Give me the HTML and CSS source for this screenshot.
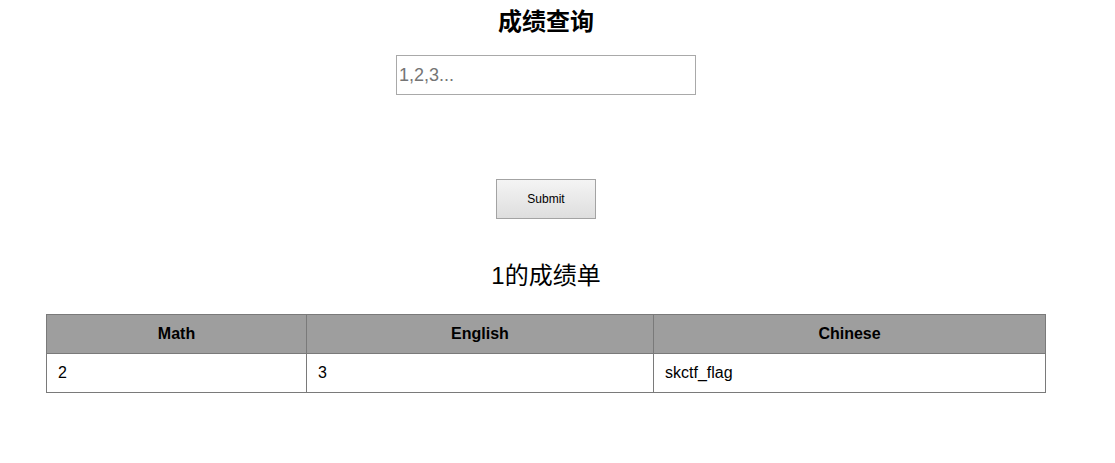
FILE: index.html
```html
<!DOCTYPE html>
<html lang="zh">
    <head>
        <meta charset="UTF-8" />
        <title>成绩查询</title>
        <link rel="stylesheet" href="styles.css">
    </head>
    <body>
        <div class="page">
            <h2 class="title">成绩查询</h2>
            <form class="query">
                <input class="id-input" type="text" name="id" placeholder="1,2,3..." />
                <button class="submit" type="button">Submit</button>
            </form>
            <h3 class="result-title">1的成绩单</h3>
            <table class="scores">
                <tr>
                    <th>Math</th>
                    <th>English</th>
                    <th>Chinese</th>
                </tr>
                <tr>
                    <td>2</td>
                    <td>3</td>
                    <td>skctf_flag</td>
                </tr>
            </table>
        </div>
    </body>
</html>
```

FILE: styles.css
```css
* {
    margin: 0;
    padding: 0;
    box-sizing: border-box;
}
body {
    font-family: "Liberation Sans", Arial, "Noto Sans CJK SC", sans-serif;
    background-color: #fff;
    color: #000;
}
.page {
    width: 1092px;
    padding-top: 7px;
    display: flex;
    flex-direction: column;
    align-items: center;
}
.title {
    font-size: 24px;
    line-height: 30px;
    font-weight: bold;
}
.query {
    display: flex;
    flex-direction: column;
    align-items: center;
}
.id-input {
    margin-top: 18px;
    width: 300px;
    height: 40px;
    border: 1px solid #a9a9a9;
    padding: 0 2px;
    font-family: inherit;
    font-size: 18px;
    color: #333;
    outline: none;
}
.id-input::placeholder {
    color: #757575;
}
.submit {
    margin-top: 84px;
    width: 100px;
    height: 40px;
    border: 1px solid #a3a3a3;
    background: linear-gradient(#f4f4f4, #dedede);
    font-family: inherit;
    font-size: 12px;
    color: #000;
}
.result-title {
    margin-top: 42px;
    font-size: 24px;
    line-height: 30px;
    font-weight: normal;
}
.scores {
    margin-top: 23px;
    width: 1000px;
    border-collapse: collapse;
    font-size: 16px;
}
.scores th,
.scores td {
    border: 1px solid #7a7a7a;
    height: 39px;
    padding-bottom: 1px;
}
.scores th {
    background-color: #9e9e9e;
    font-weight: bold;
    text-align: center;
}
.scores td {
    padding-left: 11px;
    text-align: left;
}
.scores th:nth-child(1) {
    width: 260px;
}
.scores th:nth-child(2) {
    width: 347px;
}
```
